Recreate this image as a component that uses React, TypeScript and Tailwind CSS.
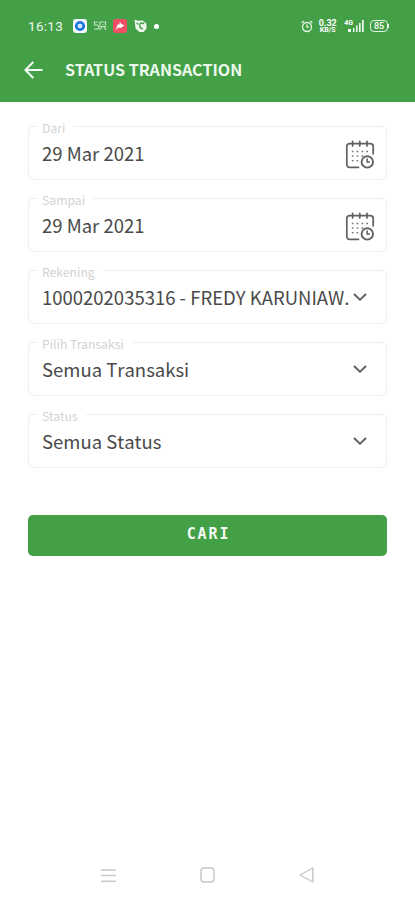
type FieldType = {
  label: string;
  value: string;
  icon: 'calendar' | 'chevron';
};

const fields: FieldType[] = [
  { label: 'Dari', value: '29 Mar 2021', icon: 'calendar' },
  { label: 'Sampai', value: '29 Mar 2021', icon: 'calendar' },
  { label: 'Rekening', value: '1000202035316 - FREDY KARUNIAW.', icon: 'chevron' },
  { label: 'Pilih Transaksi', value: 'Semua Transaksi', icon: 'chevron' },
  { label: 'Status', value: 'Semua Status', icon: 'chevron' },
];

const CalendarClock = () => (
  <svg width="30" height="30" viewBox="0 0 30 30" fill="none" stroke="#606060" strokeWidth="1.7" strokeLinecap="round">
    <path d="M13.5 27.4H4.6a2.8 2.8 0 0 1-2.8-2.8V6.4a2.8 2.8 0 0 1 2.8-2.8h20.8a2.8 2.8 0 0 1 2.8 2.8v7.4" />
    <path d="M7.6 1.3v4.6M14.8 1.3v4.6M22 1.3v4.6" />
    <g stroke="#777777" strokeWidth="1.6" strokeLinecap="butt">
      <path d="M6.8 11.5h1.7M11.6 11.5h1.7M16.5 11.5h1.7M21.3 11.5H23" />
      <path d="M6.8 16h1.7M11.6 16h1.7M16.5 16h1.7" />
      <path d="M6.8 20.8h1.7M11.6 20.8h1.7" />
    </g>
    <circle cx="22.3" cy="21.9" r="5.7" strokeWidth="1.9" />
    <path d="M22.2 19v3.1h2.2" strokeWidth="1.5" />
  </svg>
);

const Chevron = () => (
  <svg width="14" height="8" viewBox="0 0 14 8" fill="none" stroke="#666666" strokeWidth="2">
    <path d="M1 1l6 5.7L13 1" />
  </svg>
);

const StatusBar = () => (
  <div className="flex h-[52px] items-center pl-7 pr-[26px] text-white">
    <span className="w-[36px] font-['Roboto'] text-[13.5px] leading-4 tracking-[0.3px] opacity-90">16:13</span>

    <div className="ml-[9px] flex items-center">
      <svg width="14" height="14" viewBox="0 0 14 14">
        <rect width="14" height="14" rx="3" fill="#f4faff" />
        <circle cx="7" cy="7" r="3.7" fill="none" stroke="#1b79de" strokeWidth="2.8" />
        <circle cx="7" cy="7" r="1.2" fill="#b9dcff" />
      </svg>
      <svg className="ml-1.5" width="14" height="12" viewBox="0 0 14 12" fill="none" stroke="#c4e4c5" strokeWidth="1.2">
        <path d="M5 2H1.5v3H4a1.7 1.7 0 0 1 0 4H1" />
        <path d="M7 5.2V2h5.5v3.2M7 10l2-3M13 10l-2-3M6.5 6.5h7M9.5 4.5h1" />
      </svg>
      <svg className="ml-1.5" width="14" height="14" viewBox="0 0 14 14">
        <rect width="14" height="14" rx="3" fill="#f24d66" />
        <path d="M6.8 2.8l1.3 2 3.4 1.7-2.7 1.8-1.6.8-1.7-.5-3 2.6 1.6-3.7.3-2.1 2 .1z" fill="#fff" />
      </svg>
      <svg className="ml-[7px]" width="13" height="14" viewBox="0 0 13 14">
        <path d="M.5.8l4 .9 4.2-.3 3.8 3.4v4.8L9.7 13H5.4L1.6 9.6z" fill="#eef8ee" />
        <path d="M2.6 4.2l2 1.2M5.6 5.2c1.4-1.4 3-1.4 4.6-.4M5.8 5.6c-.4 2.6 1 4.3 3.2 4.2" fill="none" stroke="#43a047" strokeWidth="1.4" />
      </svg>
      <span className="ml-[7px] h-[5px] w-[5px] rounded-full bg-white" />
    </div>

    <div className="ml-auto flex items-center">
      <svg width="12" height="13" viewBox="0 0 12 13" fill="none" stroke="#e4f4e4" strokeWidth="1.3">
        <circle cx="6" cy="7" r="4.5" />
        <path d="M.7 3L3 1M11.3 3L9 1M6 4.6V7.2h1.8" />
      </svg>
      <div className="ml-[5px] flex w-[19px] flex-col items-center font-['Roboto'] font-bold">
        <span className="text-[9px] leading-[8px]">0.32</span>
        <span className="text-[7px] leading-[7px]">KB/S</span>
      </div>
      <div className="ml-[7px] flex items-end">
        <div className="flex flex-col font-['Roboto'] text-[7px] font-bold leading-[6px]">
          <span>4G</span>
          <span className="ml-[4px] mt-[3px] h-[3px] w-[3px] bg-white/90" />
        </div>
        <svg width="11" height="12" viewBox="0 0 11 12" fill="#e8f6e8">
          <path d="M0 8h1.5v4H0zM3 5.5h1.6V12H3zM6 3h1.7v9H6zM9 0h1.8v12H9z" />
        </svg>
      </div>
      <div className="ml-1.5 flex h-3 w-[18px] items-center justify-center rounded-[4px] border border-white/85 font-['Roboto'] text-[9px] font-medium leading-none">
        85
      </div>
      <span className="h-1 w-px bg-white/85" />
    </div>
  </div>
);

const Field = ({ label, value, icon }: FieldType) => (
  <div className="relative flex h-[54px] items-center rounded-[5px] border border-[#efefef] pl-[13px] pr-3">
    <span className="absolute -top-[8px] left-[8px] bg-white pl-[5px] pr-2 text-[12.2px] leading-[18px] text-[#d2d2d2]">
      {label}
    </span>
    <span className="h-7 w-[305px] flex-none whitespace-nowrap pt-[3px] text-[18.5px] leading-[22px] text-[#4a4a4a] [font-kerning:none]">
      {value}
    </span>
    {icon === 'calendar' ? (
      <div className="-ml-[2px] flex-none pt-1">
        <CalendarClock />
      </div>
    ) : (
      <div className="ml-[6px] flex-none">
        <Chevron />
      </div>
    )}
  </div>
);

const NavBar = () => (
  <div className="flex h-[50px] items-center justify-between pl-[101px] pr-[101px]">
    <svg width="15" height="15" viewBox="0 0 15 15" stroke="#c9c9c9" strokeWidth="1.4">
      <path d="M0 2h15M0 7.5h15M0 13.2h15" />
    </svg>
    <svg width="15" height="16" viewBox="0 0 15 16" fill="none" stroke="#c6c6c6" strokeWidth="1.4">
      <rect x="1" y="1" width="13" height="14" rx="3" />
    </svg>
    <svg width="15" height="16" viewBox="0 0 15 16" fill="none" stroke="#c6c6c6" strokeWidth="1.4" strokeLinejoin="round">
      <path d="M13.8 1v14L1 8z" />
    </svg>
  </div>
);

export default function App() {
  return (
    <div className="flex h-[900px] w-[415px] flex-col overflow-hidden bg-white font-['Noto_Sans_CJK_JP','Noto_Sans',sans-serif]">
      <header className="h-[102px] bg-[#43a047] text-white">
        <StatusBar />
        <div className="flex h-9 items-center pl-6">
          <svg width="19" height="18" viewBox="0 0 19 18" fill="none" stroke="#f4fbf4" strokeWidth="2">
            <path d="M18.5 9H1.5M9.3 1L1.3 9l8 8" />
          </svg>
          <h1 className="-mt-0.5 ml-[22px] text-[16.1px] font-bold leading-6 text-[#edf8ed]">STATUS TRANSACTION</h1>
        </div>
      </header>

      <main className="flex flex-1 flex-col px-7 pt-6">
        <div className="flex flex-col gap-[18px]">
          {fields.map((field) => (
            <Field key={field.label} {...field} />
          ))}
        </div>
        <button className="mt-[47px] h-[41px] rounded-[5px] bg-[#43a047] pb-[3px] pl-[2px] font-['DejaVu_Sans_Mono',monospace] text-[15px] font-bold leading-5 tracking-[1.9px] text-[#f4fbf4]">
          CARI
        </button>
      </main>

      <NavBar />
    </div>
  );
}
